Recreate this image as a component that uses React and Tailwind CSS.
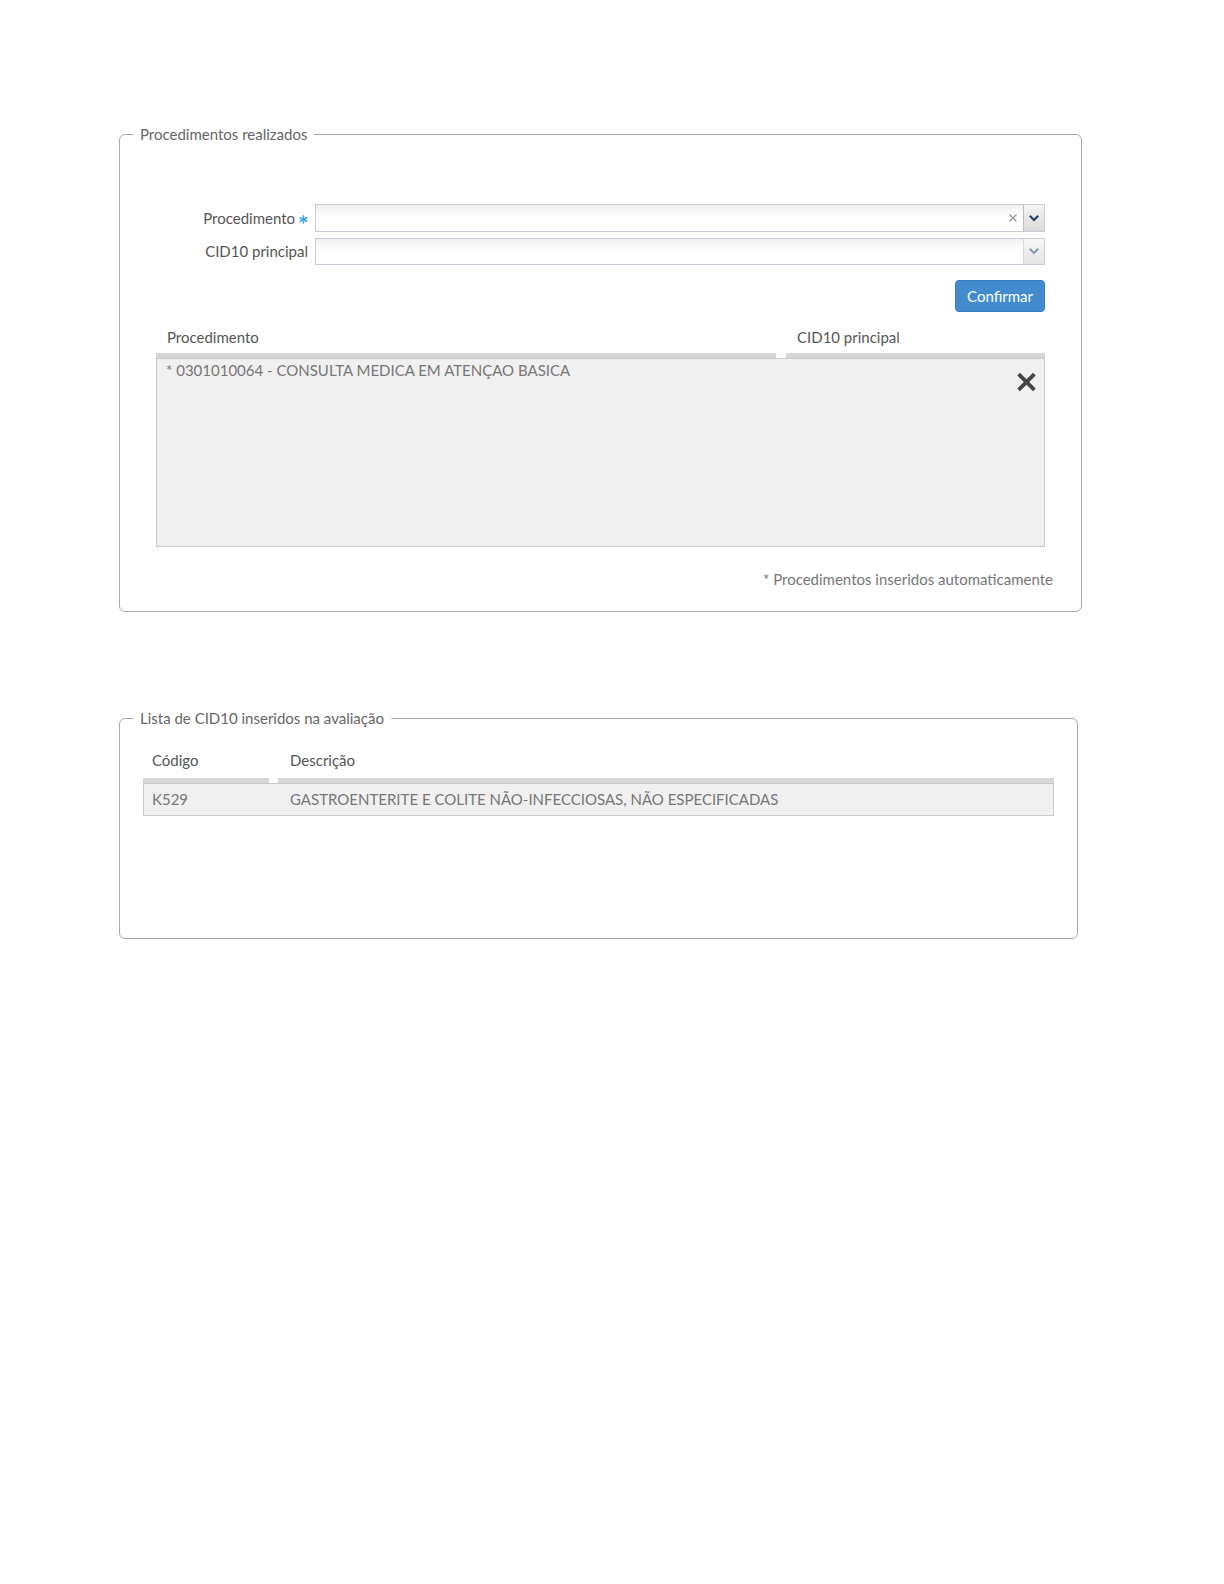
import React from "react";

function Chevron({ color }) {
  return (
    <svg width="10" height="7" viewBox="0 0 10 7">
      <path d="M1.5 1.5 L5 5 L8.5 1.5" fill="none" stroke={color} strokeWidth="2" strokeLinecap="square" />
    </svg>
  );
}

function Asterisk() {
  return (
    <svg width="9" height="9" viewBox="0 0 10 10" className="ml-[4px] mt-[3px]">
      <g stroke="#3aa6f0" strokeWidth="1.8" strokeLinecap="round">
        <line x1="5" y1="1" x2="5" y2="9" />
        <line x1="1.5" y1="3" x2="8.5" y2="7" />
        <line x1="1.5" y1="7" x2="8.5" y2="3" />
      </g>
    </svg>
  );
}

function SelectBox({ clear, dark, h }) {
  return (
    <div className={`flex w-[730px] ${h} border border-[#c8ccd6] bg-gradient-to-b from-[#f1f1f3] via-white to-white`}>
      <div className="flex-1" />
      {clear && (
        <div className="flex w-[20px] items-center justify-center">
          <svg width="10" height="10" viewBox="0 0 10 10">
            <path d="M1.5 1.5 L8.5 8.5 M8.5 1.5 L1.5 8.5" stroke="#9d9a93" strokeWidth="1.3" />
          </svg>
        </div>
      )}
      <div
        className={`flex w-[21px] items-center justify-center border-l ${
          dark ? "border-[#b9bcc4] bg-gradient-to-b from-[#f5f5f5] to-[#d9d9d9]" : "border-[#d6d8de] bg-gradient-to-b from-[#f7f7f7] to-[#e4e4e4]"
        }`}
      >
        <Chevron color={dark ? "#1d3b70" : "#8797b8"} />
      </div>
    </div>
  );
}

export default function App() {
  return (
    <div className="min-h-[1584px] bg-white pl-[119px] pt-[124px] font-['Lato','Open_Sans',sans-serif]">
      <fieldset className="w-[963px] rounded-[6px] border border-[#a9a9a9] pb-[22px]">
        <legend className="ml-[13px] px-[7px] text-[15px] leading-[20px] text-[#666]">
          Procedimentos realizados
        </legend>

        <div className="pt-[60px]">
          <div className="flex h-[28px] items-center">
            <div className="flex w-[188px] items-center justify-end text-[15px] text-[#555]">
              <span>Procedimento</span>
              <Asterisk />
            </div>
            <div className="ml-[7px]">
              <SelectBox clear dark h="h-[28px]" />
            </div>
          </div>
          <div className="mt-[6px] flex h-[27px] items-center">
            <div className="w-[188px] text-right text-[15px] text-[#555]">CID10 principal</div>
            <div className="ml-[7px]">
              <SelectBox h="h-[27px]" />
            </div>
          </div>
        </div>

        <div className="mt-[15px] flex justify-end pr-[36px]">
          <button className="h-[32px] w-[90px] rounded-[4px] border border-[#3a7fc0] bg-[#428bcf] text-[15px] text-white">
            Confirmar
          </button>
        </div>

        <div className="ml-[36px] mt-[15px] w-[889px]">
          <div className="flex gap-[10px] text-[15px] leading-[20px] text-[#555]">
            <div className="w-[620px] border-b-[5px] border-[#d7d7d7] pb-[6px] pl-[11px]">Procedimento</div>
            <div className="flex-1 border-b-[5px] border-[#d7d7d7] pb-[6px] pl-[11px]">CID10 principal</div>
          </div>
          <div className="relative h-[189px] border border-[#c9c9c9] bg-[#f0f0f0]">
            <div className="pl-[9px] pt-[1px] text-[15px] leading-[20px] text-[#777]">
              * 0301010064 - CONSULTA MEDICA EM ATENÇAO BASICA
            </div>
            <svg className="absolute right-[7px] top-[13px]" width="21" height="20" viewBox="0 0 20 19">
              <path d="M2.5 2 L17.5 17 M17.5 2 L2.5 17" stroke="#444" strokeWidth="3.6" />
            </svg>
          </div>
        </div>

        <div className="mt-[22px] pr-[28px] text-right text-[15px] leading-[20px] text-[#777]">
          * Procedimentos inseridos automaticamente
        </div>
      </fieldset>

      <fieldset className="mt-[96px] w-[959px] rounded-[6px] border border-[#a9a9a9] pb-[122px]">
        <legend className="ml-[13px] px-[7px] text-[15px] leading-[20px] text-[#666]">
          Lista de CID10 inseridos na avaliação
        </legend>
        <div className="ml-[23px] mt-[22px] w-[911px]">
          <div className="flex gap-[9px] text-[15px] leading-[20px] text-[#555]">
            <div className="w-[126px] border-b-[5px] border-[#d7d7d7] pb-[8px] pl-[9px]">Código</div>
            <div className="flex-1 border-b-[5px] border-[#d7d7d7] pb-[8px] pl-[12px]">Descrição</div>
          </div>
          <div className="flex border border-[#c9c9c9] bg-[#f0f0f0] pb-[6px] pt-[5px] text-[15px] leading-[20px] text-[#777]">
            <div className="w-[134px] pl-[8px]">K529</div>
            <div className="flex-1 pl-[12px]">GASTROENTERITE E COLITE NÃO-INFECCIOSAS, NÃO ESPECIFICADAS</div>
          </div>
        </div>
      </fieldset>
    </div>
  );
}
